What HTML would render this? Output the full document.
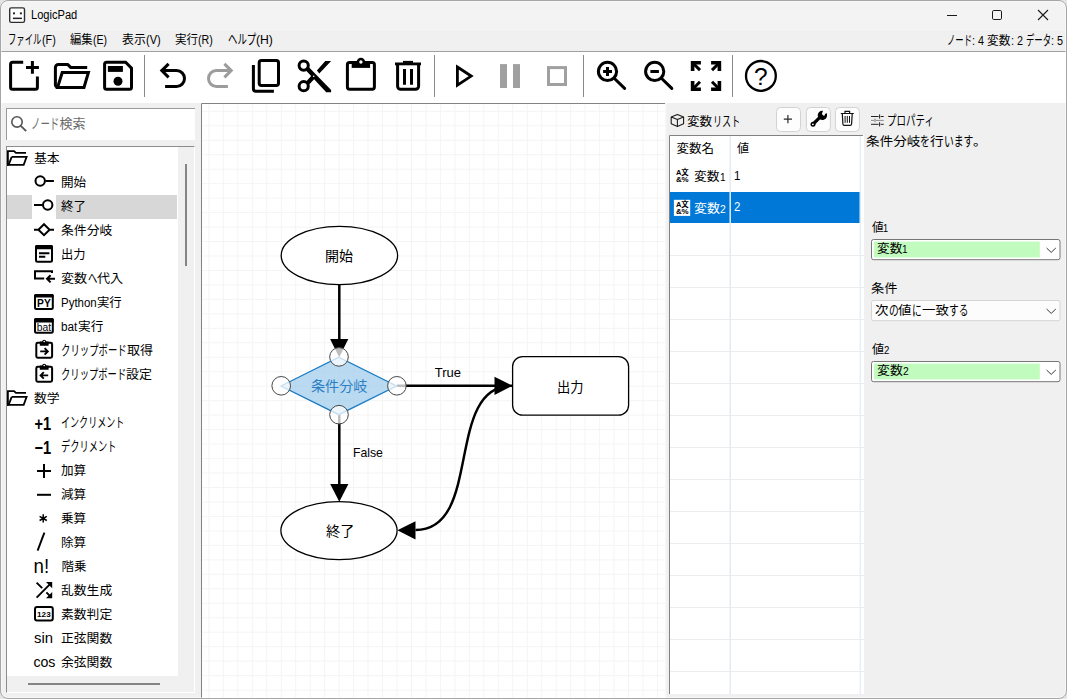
<!DOCTYPE html>
<html lang="ja"><head><meta charset="utf-8"><title>LogicPad</title>
<style>
html,body{margin:0;padding:0}
body{width:1067px;height:699px;overflow:hidden;background:#f0f0f0;position:relative;
 font-family:"Liberation Sans","Noto Sans CJK JP",sans-serif;font-size:13px;color:#000}
.abs,.t,svg.ov{position:absolute}
.t{white-space:nowrap;line-height:20px;height:20px;transform-origin:0 50%}
#title{left:0;top:0;width:1067px;height:31px;background:#f3f3f3}
#menubar{left:0;top:31px;width:1067px;height:20px;background:#f0f0f0}
#menuline{left:0;top:51px;width:1067px;height:1px;background:#a0a0a0}
#toolbar{left:0;top:52px;width:1067px;height:51px;background:#fff}
.sep{top:55px;width:1px;height:42px;background:#8a8a8a}
#search{left:6px;top:108px;width:187.5px;height:31px;background:#fff;border-top:1px solid #9a9a9a;border-left:1px solid #9a9a9a;box-sizing:content-box}
#tree{left:6px;top:146px;width:187px;height:545px;background:#fff;border-top:1px solid #8c8c8c;border-left:1px solid #8c8c8c;border-right:1px solid #fff;border-bottom:1px solid #fff}
#frame{position:absolute;left:0;top:0;width:1065px;height:697px;border:1px solid #a6a6a6;border-radius:8px;box-shadow:0 0 0 12px #e4e4e4, inset 0 0 0 1px rgba(255,255,255,.45);pointer-events:none}
.l{height:0}

</style></head>
<body>
<div class="abs" id="title"></div>
<div class="abs" id="menubar"></div>
<div class="abs" id="menuline"></div>
<div class="abs" id="toolbar"></div>
<div class="abs sep" style="left:144px"></div>
<div class="abs sep" style="left:434px"></div>
<div class="abs sep" style="left:583px"></div>
<div class="abs sep" style="left:732px"></div>
<svg class="ov" style="left:0;top:52px" width="1067" height="51" viewBox="0 52 1067 51" fill="none" stroke="#000" stroke-width="3">
<!-- new -->
<path d="M23.2 62.3H12.6a2 2 0 0 0-2 2V87.3a2 2 0 0 0 2 2H35.4a2 2 0 0 0 2-2V76.6"/>
<path d="M26 67.5H38.9M32.4 61.1V73.8"/>
<!-- open -->
<path d="M57 87.3a2.5 2.5 0 0 1-1.6-2.3V67.4a3 3 0 0 1 3-3H67.6L70.6 67.4H87.2" stroke-linejoin="round"/>
<path d="M62.2 72.5H88.4L84 87.4H57.6Z" stroke-linejoin="miter"/>
<!-- save -->
<path d="M106.6 62.3H125.6L131.5 68.2V87.3a2 2 0 0 1-2 2H106.6a2 2 0 0 1-2-2V64.3a2 2 0 0 1 2-2Z"/>
<rect x="107.9" y="66" width="15" height="5.9" fill="#000" stroke="none"/>
<circle cx="118" cy="81.3" r="4.5" fill="#000" stroke="none"/>
<!-- undo -->
<path d="M168.6 63.9L161.8 70.6L168.6 77.4" stroke-linejoin="miter"/>
<path d="M162.5 70.6H176.6a7.9 7.9 0 0 1 0 15.8H165.1"/>
<!-- redo -->
<g stroke="#9c9c9c"><path d="M224.4 63.9L231.2 70.6L224.4 77.4"/>
<path d="M230.5 70.6H216.4a7.9 7.9 0 0 0 0 15.8H227.9"/></g>
<!-- copy -->
<rect x="259.2" y="60.5" width="19.3" height="24.9" rx="2.2"/>
<path d="M253.4 65V88.8a2.5 2.5 0 0 0 2.5 2.5H273.9"/>
<!-- cut -->
<circle cx="303.7" cy="65.6" r="4.6"/><circle cx="303.7" cy="86.2" r="4.6"/>
<path d="M306 70.5L309.2 67.6L331.1 89.9V92.2H326.2ZM316.9 70.6L325.3 61.1H331.1L319.3 73.4ZM306.2 81.5L311.6 75.6L314.8 78.6L309.2 84.4Z" fill="#000" stroke="none"/>
<circle cx="313.7" cy="76.2" r="0.8" fill="#fff" stroke="none"/>
<!-- paste -->
<rect x="347.4" y="62.6" width="27" height="26.7" rx="2.2"/>
<rect x="351.7" y="61.1" width="18.4" height="6.8" fill="#000" stroke="none"/>
<circle cx="360.9" cy="62" r="4.2" fill="#000" stroke="none"/><circle cx="360.9" cy="62" r="1.7" fill="#fff" stroke="none"/>
<!-- delete -->
<rect x="395" y="62.5" width="26" height="2.8" fill="#000" stroke="none"/>
<rect x="403" y="60.9" width="10" height="2" fill="#000" stroke="none"/>
<path d="M397.6 65V86.3a3 3 0 0 0 3 3H415.6a3 3 0 0 0 3-3V65"/>
<path d="M404.5 69.1V84.8M411.5 69.1V84.8"/>
<!-- play -->
<path d="M457.4 67L471.2 76.1L457.4 85.2Z" stroke-linejoin="miter" stroke-width="2.8"/>
<!-- pause / stop -->
<rect x="500" y="64.1" width="7" height="23.9" fill="#a0a0a0" stroke="none"/>
<rect x="513" y="64.1" width="7" height="23.9" fill="#a0a0a0" stroke="none"/>
<rect x="548.5" y="67.6" width="17" height="16.9" stroke="#a0a0a0"/>
<!-- zoom in / out -->
<circle cx="607.5" cy="71.4" r="9.1"/><path d="M614.2 78.2L624.6 88.4" stroke-linecap="round"/>
<path d="M603.1 71.5H612M607.5 67.1V76"/>
<circle cx="654.7" cy="71.4" r="9.1"/><path d="M661.4 78.2L671.8 88.4" stroke-linecap="round"/>
<path d="M650.4 71.5H658.9"/>
<!-- fit -->
<g stroke-width="3.6"><path d="M700.9 62.7H692.6V71M711.1 62.7H719.4V71M700.9 89.2H692.6V81M711.1 89.2H719.4V81"/>
<path d="M692.6 62.7L700 70.1M719.4 62.7L712 70.1M692.6 89.2L700 81.8M719.4 89.2L712 81.8" stroke-width="3"/></g>
<!-- help -->
<circle cx="760.9" cy="75.9" r="14.9" stroke-width="2.3"/>
<text x="760.9" y="85" font-family="Liberation Sans,sans-serif" font-size="24.5" fill="#000" stroke="none" text-anchor="middle">?</text>
</svg>

<div class="abs" id="search"></div>
<div class="abs" id="tree"></div>
<svg class="ov" style="left:201px;top:103px" width="464" height="595" viewBox="201 103 464 595" fill="none">
<defs><pattern id="grid" x="208.4" y="110.8" width="14.47" height="14.47" patternUnits="userSpaceOnUse">
<path d="M0.5 0V14.47M0 0.5H14.47" stroke="#f4f4f4" stroke-width="1"/></pattern></defs>
<rect x="201" y="103" width="464" height="595" fill="#fff"/>
<rect x="201" y="103" width="464" height="595" fill="url(#grid)"/>
<path d="M201.5 698V103.5H665" stroke="#828282" stroke-width="1"/>
<!-- edges -->
<g stroke="#000" stroke-width="2.5">
<path d="M339.3 285V340"/>
<path d="M397 385.7H496"/>
<path d="M339.3 415V486"/>
<path d="M512 385.7C444 385.7 483.5 530 415.5 530" stroke-width="2.45"/>
</g>
<g fill="#000">
<path d="M330.1 338.9H348.3L339.2 357.2Z"/>
<path d="M494.5 376.7V394.9L512.3 385.8Z"/>
<path d="M330.2 484H348.4L339.3 501.8Z"/>
<path d="M415.5 521.2V539.6L397.4 530.2Z"/>
</g>
<!-- nodes -->
<ellipse cx="339.4" cy="255.5" rx="58.2" ry="29.2" fill="#fff" stroke="#000" stroke-width="1.3"/>
<ellipse cx="339" cy="530.6" rx="58.1" ry="29" fill="#fff" stroke="#000" stroke-width="1.3"/>
<rect x="512.6" y="356.6" width="116" height="58.6" rx="10" fill="#fff" stroke="#000" stroke-width="1.3"/>
<path d="M281 386L338.8 357.2L396.6 386L338.8 414.7Z" fill="#9ac8ea" fill-opacity=".68" stroke="#1b7dc3" stroke-width="1.3"/>
<g fill="#fff" fill-opacity=".74" stroke="#474747" stroke-width="1">
<circle cx="339" cy="356.9" r="9.3"/><circle cx="281.2" cy="385.8" r="9.3"/><circle cx="396.9" cy="385.8" r="9.3"/><circle cx="339" cy="414.7" r="9.3"/>
</g>
</svg>

<svg class="ov" style="left:665px;top:103px" width="402" height="596" viewBox="665 103 402 596" fill="none">
<rect x="665" y="103" width="1.3" height="595" fill="#f8f8f8"/>
<!-- cube -->
<path d="M677.4 114.4L683.6 116.9V123.8L677.4 126.5L671.2 123.8V116.9ZM671.2 116.9L677.4 119.5L683.6 116.9M677.4 119.5V126.5" stroke="#1c1c1c" stroke-width="1.1" stroke-linejoin="round"/>
<!-- buttons -->
<g fill="#fdfdfd" stroke="#d2d2d2" stroke-width="1"><rect x="776.5" y="107.5" width="24" height="24" rx="4"/><rect x="806.4" y="107.5" width="24" height="24" rx="4"/><rect x="835.4" y="107.5" width="24" height="24" rx="4"/></g>
<path d="M783.8 119.2H792M787.9 115.1V123.3" stroke="#2a2a2a" stroke-width="1.2"/>
<!-- wrench -->
<path d="M813.3 123.9L820.6 116.6" stroke="#000" stroke-width="3.3" stroke-linecap="butt"/>
<circle cx="813" cy="124.2" r="2.5" fill="#000"/>
<path d="M826.4 112.9a4.7 4.7 0 1 1-3.4-2.2l-1.2 3.4 2.2 1.9z" fill="#000"/>
<path d="M824.6 114.6L826.6 113.2L826.4 116.2Z" fill="#000"/>
<circle cx="812.9" cy="124.3" r="0.9" fill="#fff"/>
<!-- trash -->
<g stroke="#111" stroke-width="1.2"><path d="M840.8 113.5H853.8M845 113V111.4H849.6V113"/>
<path d="M842.3 113.8L842.9 124a1.4 1.4 0 0 0 1.4 1.3H850.2a1.4 1.4 0 0 0 1.4-1.3L852.2 113.8"/>
<path d="M845.1 116V122.8M847.3 116V122.8M849.5 116V122.8" stroke-width="1"/></g>
<!-- grid -->
<rect x="669" y="135" width="195" height="559" fill="#fff"/>
<g stroke="#ececec" stroke-width="1">
<path d="M670 255.5H864M670 287.5H864M670 319.5H864M670 351.5H864M670 383.5H864M670 415.5H864M670 447.5H864M670 479.5H864M670 511.5H864M670 543.5H864M670 575.5H864M670 607.5H864M670 639.5H864M670 671.5H864"/></g>
<rect x="670" y="192" width="190.5" height="31" fill="#0078d7"/>
<path d="M730.2 136V694" stroke="#e4ebf4" stroke-width="1.5"/>
<path d="M860.2 136V694" stroke="#e8eef6" stroke-width="1.4"/>
<path d="M669.5 694V135.5H863" stroke="#828282" stroke-width="1"/>
<!-- row icons -->
<rect x="673.9" y="199.8" width="16.3" height="16.1" fill="#fff"/>
<g font-family="Liberation Sans,Noto Sans CJK JP,sans-serif" font-weight="700" font-size="7.6" fill="#000">
<text x="675.9" y="175.4" textLength="12.8" lengthAdjust="spacingAndGlyphs">A文</text>
<text x="675.9" y="182.2" textLength="12.8" lengthAdjust="spacingAndGlyphs">&amp;%</text>
<text x="675.9" y="207" textLength="12.8" lengthAdjust="spacingAndGlyphs">A文</text>
<text x="675.9" y="213.8" textLength="12.8" lengthAdjust="spacingAndGlyphs">&amp;%</text>
</g>
<!-- property header icon -->
<g stroke-width="1"><path d="M871 116.5H878.6M880.6 116.5H883.7M871 124.3H878.6M880.6 124.3H883.7" stroke="#222"/>
<path d="M871 120.4H874M876 120.4H883.7" stroke="#8a8a8a"/>
<path d="M879.6 114.4V118.6M879.6 122.2V126.4" stroke="#222"/><path d="M875 118.6V122.2" stroke="#777"/></g>
<!-- combos -->
<rect x="871.5" y="239.5" width="188.5" height="20.2" rx="2" fill="#fff" stroke="#767676"/>
<rect x="874" y="241.6" width="165.8" height="15.8" fill="#c1fbbe"/>
<rect x="871.5" y="300.5" width="188.5" height="20.2" rx="2" fill="#fcfcfc" stroke="#d4d4d4"/>
<rect x="871.5" y="361.5" width="188.5" height="20.2" rx="2" fill="#fff" stroke="#767676"/>
<rect x="874" y="363.6" width="165.8" height="15.8" fill="#c1fbbe"/>
<g stroke="#3a3a3a" stroke-width="1"><path d="M1046.6 248L1051.2 252.4L1055.8 248M1046.6 309L1051.2 313.4L1055.8 309M1046.6 370L1051.2 374.4L1055.8 370"/></g>
</svg>

<svg class="ov" style="left:0;top:0" width="1067" height="31" viewBox="0 0 1067 31" fill="none" stroke="#1a1a1a" stroke-width="1">
<rect x="9.7" y="7.9" width="14.8" height="14.5" rx="1.6" fill="#fff" stroke="#2e2e2e" stroke-width="1.4"/>
<rect x="13" y="12.4" width="2" height="1.9" fill="#222" stroke="none"/>
<rect x="19.9" y="12.4" width="2" height="1.9" fill="#222" stroke="none"/>
<rect x="12.9" y="17.6" width="9" height="1.5" fill="#222" stroke="none"/>
<path d="M947 15.5H957"/>
<rect x="992.5" y="10.5" width="9" height="9" rx="1.3"/>
<path d="M1038 10L1048 20M1048 10L1038 20" stroke-width="1.1"/>
</svg>

<svg class="ov" style="left:0;top:103px" width="201" height="596" viewBox="0 103 201 596" fill="none" stroke="#000" stroke-width="2">
<!-- selection highlight (row 2) -->
<rect x="7" y="195" width="25" height="24" fill="#d7d7d7" stroke="none"/>
<rect x="56" y="195" width="121" height="24" fill="#d7d7d7" stroke="none"/>
<!-- scrollbars -->
<rect x="178" y="147" width="16" height="545" fill="#f0f0f0" stroke="none"/>
<rect x="7" y="676" width="187" height="16" fill="#f0f0f0" stroke="none"/>
<rect x="185" y="164" width="2" height="102" fill="#858585" stroke="none"/>
<rect x="28" y="683" width="132" height="2" fill="#858585" stroke="none"/>
<!-- search icon -->
<circle cx="17" cy="121.9" r="5.2" stroke="#555" stroke-width="1.6"/><path d="M20.8 125.8L26.2 131.2" stroke="#555" stroke-width="1.8"/>
<!-- folders -->
<g stroke-width="1.8"><path d="M7.9 165.8V151.1H14.1L15.9 152.9H26" stroke-linejoin="miter"/>
<path d="M11.7 156.9H26.6L23.7 164.9H7" stroke-linejoin="miter"/><path d="M11.7 156.9L8.6 164.9"/></g>
<g stroke-width="1.8" transform="translate(0 240)"><path d="M7.9 165.8V151.1H14.1L15.9 152.9H26" stroke-linejoin="miter"/>
<path d="M11.7 156.9H26.6L23.7 164.9H7" stroke-linejoin="miter"/><path d="M11.7 156.9L8.6 164.9"/></g>
<!-- start / end / branch -->
<circle cx="40.2" cy="181" r="4.7"/><path d="M45.4 181H53.9"/>
<circle cx="47.7" cy="205" r="4.7"/><path d="M34 205H42.5"/>
<path d="M44 224.2L49.6 229.7L44 235.2L38.4 229.7Z M34 229.7H38.4M49.6 229.7H54"/>
<!-- output -->
<rect x="36" y="246" width="16" height="15.8" rx="1.5"/><rect x="35" y="245" width="18" height="4.2" rx="1.5" fill="#000" stroke="none"/>
<path d="M39 253.2H49.4M39 256.8H45.3" stroke-width="1.9"/>
<!-- assign -->
<path d="M52 273V271.2H35V278.6H44.2" stroke-width="2"/><path d="M55 278.8H47.6M50.6 275.2L47 278.8L50.6 282.4" stroke-width="2"/>
<!-- PY -->
<rect x="35" y="295" width="17.8" height="14" rx="1.5"/><rect x="34" y="294" width="19.8" height="3.4" rx="1.5" fill="#000" stroke="none"/>
<text x="43.9" y="307.1" font-family="Liberation Sans,sans-serif" font-weight="700" font-size="10" fill="#000" stroke="none" text-anchor="middle" textLength="13.6" lengthAdjust="spacingAndGlyphs">PY</text>
<!-- bat -->
<rect x="35" y="319" width="17.8" height="13.8" rx="1.5"/><rect x="34" y="318" width="19.8" height="4.6" rx="1.5" fill="#000" stroke="none"/>
<text x="43.9" y="331.2" font-family="Liberation Sans,sans-serif" font-size="10.5" fill="#000" stroke="none" text-anchor="middle" textLength="14.4" lengthAdjust="spacingAndGlyphs">bat</text>
<!-- clipboards -->
<g><rect x="36.3" y="342.8" width="15.8" height="14.9" rx="1.4"/>
<path d="M39.8 345.8V341.4H42a2.3 2.3 0 0 1 4.4 0H48.6V345.8Z" fill="#000" stroke="none"/><circle cx="44.2" cy="341.5" r="0.8" fill="#fff" stroke="none"/></g>
<path d="M40.2 351.4H47.4M44.6 348.2L47.8 351.4L44.6 354.6" stroke-width="1.9"/>
<g transform="translate(0 24)"><rect x="36.3" y="342.8" width="15.8" height="14.9" rx="1.4"/>
<path d="M39.8 345.8V341.4H42a2.3 2.3 0 0 1 4.4 0H48.6V345.8Z" fill="#000" stroke="none"/><circle cx="44.2" cy="341.5" r="0.8" fill="#fff" stroke="none"/></g>
<path d="M48.2 375.4H41M43.8 372.2L40.6 375.4L43.8 378.6" stroke-width="1.9"/>
<!-- +1 / -1 -->
<text x="34.4" y="430" font-family="Liberation Sans,sans-serif" font-weight="700" font-size="18" fill="#000" stroke="none" textLength="16.6" lengthAdjust="spacingAndGlyphs">+1</text>
<text x="34.4" y="454" font-family="Liberation Sans,sans-serif" font-weight="700" font-size="18" fill="#000" stroke="none" textLength="16.6" lengthAdjust="spacingAndGlyphs">−1</text>
<!-- + - * / -->
<path d="M37 471H51M44 464V478"/>
<path d="M37 494.8H51"/>
<path d="M43.2 514.2V522.6M39.6 516.3L46.8 520.5M46.8 516.3L39.6 520.5" stroke-width="1.5"/>
<path d="M44.4 532.6L37.6 550.6" stroke-width="1.9"/>
<text x="33.6" y="573" font-family="Liberation Sans,sans-serif" font-size="20" fill="#000" stroke="none" textLength="15.6" lengthAdjust="spacingAndGlyphs">n!</text>
<!-- shuffle -->
<path d="M36.6 597.6L50.8 583.4M36.6 582.6L42.2 588.2M46.4 592.4L50.8 596.8" stroke-width="1.9"/>
<path d="M46 582H52.2V588.2ZM46 598.2H52.2V592Z" fill="#000" stroke="none"/>
<!-- 123 -->
<rect x="35" y="607" width="17.8" height="13.6" rx="2"/>
<text x="43.9" y="616.8" font-family="Liberation Sans,sans-serif" font-weight="700" font-size="7.8" fill="#000" stroke="none" text-anchor="middle" textLength="13.6" lengthAdjust="spacingAndGlyphs">123</text>
<text x="34" y="643.2" font-family="Liberation Sans,sans-serif" font-size="15.5" fill="#000" stroke="none" textLength="19" lengthAdjust="spacingAndGlyphs">sin</text>
<text x="33.4" y="667.2" font-family="Liberation Sans,sans-serif" font-size="15.5" fill="#000" stroke="none" textLength="22" lengthAdjust="spacingAndGlyphs">cos</text>
</svg>

<div class="l"><span class="t" style="left:30.50px;top:4.60px;font-size:12px;color:#000;transform:scaleX(0.9251);">LogicPad</span></div>
<div class="l"><span class="t" style="left:8.40px;top:30.00px;font-size:13.2px;color:#000;transform:scaleX(0.6333);">ファイル</span><span class="t" style="left:41.81px;top:30.00px;font-size:12px;color:#000;transform:scaleX(0.8998);">(F)</span></div>
<div class="l"><span class="t" style="left:70.30px;top:30.00px;font-size:12px;color:#000;transform:scaleX(0.9410);">編集</span><span class="t" style="left:92.90px;top:30.00px;font-size:12px;color:#000;transform:scaleX(0.8751);">(E)</span></div>
<div class="l"><span class="t" style="left:122.10px;top:30.00px;font-size:12px;color:#000;transform:scaleX(0.9898);">表示</span><span class="t" style="left:145.87px;top:30.00px;font-size:12px;color:#000;transform:scaleX(0.9205);">(V)</span></div>
<div class="l"><span class="t" style="left:175.40px;top:30.00px;font-size:12px;color:#000;transform:scaleX(0.9565);">実行</span><span class="t" style="left:198.37px;top:30.00px;font-size:12px;color:#000;transform:scaleX(0.8895);">(R)</span></div>
<div class="l"><span class="t" style="left:228.00px;top:30.00px;font-size:13.2px;color:#000;transform:scaleX(0.7146);">ヘルプ</span><span class="t" style="left:256.27px;top:30.00px;font-size:12px;color:#000;transform:scaleX(1.0154);">(H)</span></div>
<div class="l"><span class="t" style="left:947.30px;top:31.00px;font-size:13.2px;color:#000;transform:scaleX(0.6345);">ノード</span><span class="t" style="left:972.40px;top:31.00px;font-size:12px;color:#000;transform:scaleX(0.9015);">: 4 </span><span class="t" style="left:987.45px;top:31.00px;font-size:12px;color:#000;transform:scaleX(0.9694);">変数</span><span class="t" style="left:1010.73px;top:31.00px;font-size:12px;color:#000;transform:scaleX(0.9015);">: 2 </span><span class="t" style="left:1025.77px;top:31.00px;font-size:13.2px;color:#000;transform:scaleX(0.6345);">データ</span><span class="t" style="left:1050.87px;top:31.00px;font-size:12px;color:#000;transform:scaleX(0.9015);">: 5</span></div>
<div class="l"><span class="t" style="left:31.40px;top:113.50px;font-size:14.3px;color:#6a6a6a;transform:scaleX(0.6559);">ノード</span><span class="t" style="left:59.53px;top:113.50px;font-size:13px;color:#6a6a6a;">検索</span></div>
<div class="l"><span class="t" style="left:34.30px;top:148.50px;font-size:12.5px;color:#000;transform:scaleX(1.0274);">基本</span></div>
<div class="l"><span class="t" style="left:61.40px;top:172.50px;font-size:12.5px;color:#000;transform:scaleX(1.0074);">開始</span></div>
<div class="l"><span class="t" style="left:61.40px;top:196.50px;font-size:12.5px;color:#000;transform:scaleX(1.0074);">終了</span></div>
<div class="l"><span class="t" style="left:61.40px;top:220.50px;font-size:12.5px;color:#000;transform:scaleX(1.0257);">条件分岐</span></div>
<div class="l"><span class="t" style="left:61.40px;top:244.50px;font-size:12.5px;color:#000;transform:scaleX(0.9794);">出力</span></div>
<div class="l"><span class="t" style="left:61.40px;top:268.50px;font-size:12.5px;color:#000;transform:scaleX(1.0467);">変数</span><span class="t" style="left:87.58px;top:268.50px;font-size:13.75px;color:#000;transform:scaleX(0.6851);">へ</span><span class="t" style="left:97.02px;top:268.50px;font-size:12.5px;color:#000;transform:scaleX(1.0467);">代入</span></div>
<div class="l"><span class="t" style="left:61.40px;top:292.50px;font-size:12.5px;color:#000;transform:scaleX(0.9176);">Python</span><span class="t" style="left:97.12px;top:292.50px;font-size:12.5px;color:#000;transform:scaleX(0.9867);">実行</span></div>
<div class="l"><span class="t" style="left:61.40px;top:316.50px;font-size:12.5px;color:#000;transform:scaleX(0.9393);">bat</span><span class="t" style="left:77.73px;top:316.50px;font-size:12.5px;color:#000;transform:scaleX(1.0100);">実行</span></div>
<div class="l"><span class="t" style="left:61.20px;top:340.50px;font-size:13.75px;color:#000;transform:scaleX(0.6819);">クリップボード</span><span class="t" style="left:126.84px;top:340.50px;font-size:12.5px;color:#000;transform:scaleX(1.0417);">取得</span></div>
<div class="l"><span class="t" style="left:61.20px;top:364.50px;font-size:13.75px;color:#000;transform:scaleX(0.6774);">クリップボード</span><span class="t" style="left:126.41px;top:364.50px;font-size:12.5px;color:#000;transform:scaleX(1.0349);">設定</span></div>
<div class="l"><span class="t" style="left:34.30px;top:388.50px;font-size:12.5px;color:#000;transform:scaleX(1.0274);">数学</span></div>
<div class="l"><span class="t" style="left:61.40px;top:412.50px;font-size:13.75px;color:#000;transform:scaleX(0.6586);">インクリメント</span></div>
<div class="l"><span class="t" style="left:61.40px;top:436.50px;font-size:13.75px;color:#000;transform:scaleX(0.6714);">デクリメント</span></div>
<div class="l"><span class="t" style="left:61.40px;top:460.50px;font-size:12.5px;color:#000;transform:scaleX(1.0074);">加算</span></div>
<div class="l"><span class="t" style="left:61.40px;top:484.50px;font-size:12.5px;color:#000;transform:scaleX(1.0074);">減算</span></div>
<div class="l"><span class="t" style="left:61.40px;top:508.50px;font-size:12.5px;color:#000;transform:scaleX(1.0074);">乗算</span></div>
<div class="l"><span class="t" style="left:61.40px;top:532.50px;font-size:12.5px;color:#000;transform:scaleX(1.0074);">除算</span></div>
<div class="l"><span class="t" style="left:61.40px;top:556.50px;font-size:12.5px;color:#000;">階乗</span></div>
<div class="l"><span class="t" style="left:61.40px;top:580.50px;font-size:12.5px;color:#000;transform:scaleX(1.0237);">乱数生成</span></div>
<div class="l"><span class="t" style="left:61.40px;top:604.50px;font-size:12.5px;color:#000;transform:scaleX(1.0237);">素数判定</span></div>
<div class="l"><span class="t" style="left:61.40px;top:628.50px;font-size:12.5px;color:#000;transform:scaleX(1.0237);">正弦関数</span></div>
<div class="l"><span class="t" style="left:61.40px;top:652.50px;font-size:12.5px;color:#000;transform:scaleX(1.0237);">余弦関数</span></div>
<div class="l"><span class="t" style="left:687.30px;top:111.50px;font-size:12.5px;color:#000;transform:scaleX(1.0072);">変数</span><span class="t" style="left:712.50px;top:111.50px;font-size:13.75px;color:#000;transform:scaleX(0.6593);">リスト</span></div>
<div class="l"><span class="t" style="left:676.60px;top:139.00px;font-size:12.5px;color:#000;">変数名</span></div>
<div class="l"><span class="t" style="left:737.00px;top:139.00px;font-size:12.5px;color:#000;transform:scaleX(0.9668);">値</span></div>
<div class="l"><span class="t" style="left:694.00px;top:166.80px;font-size:12.5px;color:#000;transform:scaleX(1.0220);">変数</span><span class="t" style="left:719.57px;top:166.80px;font-size:11px;color:#000;transform:scaleX(0.9198);">1</span></div>
<div class="l"><span class="t" style="left:734.20px;top:165.60px;font-size:12px;color:#000;transform:scaleX(0.9570);">1</span></div>
<div class="l"><span class="t" style="left:694.00px;top:198.50px;font-size:12.5px;color:#fff;transform:scaleX(1.0417);">変数</span><span class="t" style="left:720.06px;top:198.50px;font-size:11px;color:#fff;transform:scaleX(0.9375);">2</span></div>
<div class="l"><span class="t" style="left:734.00px;top:197.30px;font-size:12px;color:#fff;transform:scaleX(0.9570);">2</span></div>
<div class="l"><span class="t" style="left:887.10px;top:110.60px;font-size:13.75px;color:#000;transform:scaleX(0.6903);">プロパティ</span></div>
<div class="l"><span class="t" style="left:866.00px;top:132.20px;font-size:12.5px;color:#000;transform:scaleX(1.0894);">条件分岐</span><span class="t" style="left:920.49px;top:132.20px;font-size:13.75px;color:#000;transform:scaleX(0.7131);">を</span><span class="t" style="left:930.30px;top:132.20px;font-size:12.5px;color:#000;transform:scaleX(1.0894);">行</span><span class="t" style="left:943.94px;top:132.20px;font-size:13.75px;color:#000;transform:scaleX(0.7131);">います</span><span class="t" style="left:973.37px;top:132.20px;font-size:12.5px;color:#000;transform:scaleX(1.0894);">。</span></div>
<div class="l"><span class="t" style="left:871.50px;top:217.50px;font-size:12.5px;color:#000;transform:scaleX(0.9319);">値</span><span class="t" style="left:883.16px;top:217.50px;font-size:11px;color:#000;transform:scaleX(0.8387);">1</span></div>
<div class="l"><span class="t" style="left:877.10px;top:239.30px;font-size:12.5px;color:#000;transform:scaleX(1.0122);">変数</span><span class="t" style="left:902.42px;top:239.30px;font-size:11px;color:#000;transform:scaleX(0.9110);">1</span></div>
<div class="l"><span class="t" style="left:871.00px;top:278.60px;font-size:12.5px;color:#000;transform:scaleX(1.0553);">条件</span></div>
<div class="l"><span class="t" style="left:875.20px;top:301.30px;font-size:12.5px;color:#000;transform:scaleX(1.0781);">次</span><span class="t" style="left:888.69px;top:301.30px;font-size:13.75px;color:#000;transform:scaleX(0.7057);">の</span><span class="t" style="left:898.41px;top:301.30px;font-size:12.5px;color:#000;transform:scaleX(1.0781);">値</span><span class="t" style="left:911.90px;top:301.30px;font-size:13.75px;color:#000;transform:scaleX(0.7057);">に</span><span class="t" style="left:921.61px;top:301.30px;font-size:12.5px;color:#000;transform:scaleX(1.0781);">一致</span><span class="t" style="left:948.58px;top:301.30px;font-size:13.75px;color:#000;transform:scaleX(0.7057);">する</span></div>
<div class="l"><span class="t" style="left:871.50px;top:339.50px;font-size:12.5px;color:#000;transform:scaleX(0.9707);">値</span><span class="t" style="left:883.65px;top:339.50px;font-size:11px;color:#000;transform:scaleX(0.8736);">2</span></div>
<div class="l"><span class="t" style="left:877.10px;top:361.00px;font-size:12.5px;color:#000;transform:scaleX(1.0318);">変数</span><span class="t" style="left:902.91px;top:361.00px;font-size:11px;color:#000;transform:scaleX(0.9287);">2</span></div>
<div class="l"><span class="t" style="left:325.10px;top:246.40px;font-size:14px;color:#000;">開始</span></div>
<div class="l"><span class="t" style="left:311.00px;top:376.20px;font-size:14px;color:#2b7fc3;transform:scaleX(1.0054);">条件分岐</span></div>
<div class="l"><span class="t" style="left:434.80px;top:362.80px;font-size:13px;color:#000;">True</span></div>
<div class="l"><span class="t" style="left:557.00px;top:376.50px;font-size:14px;color:#000;transform:scaleX(0.9464);">出力</span></div>
<div class="l"><span class="t" style="left:353.20px;top:442.90px;font-size:13px;color:#000;transform:scaleX(0.9403);">False</span></div>
<div class="l"><span class="t" style="left:325.50px;top:521.40px;font-size:14px;color:#000;transform:scaleX(1.0179);">終了</span></div>
<div id="frame"></div>

</body></html>
